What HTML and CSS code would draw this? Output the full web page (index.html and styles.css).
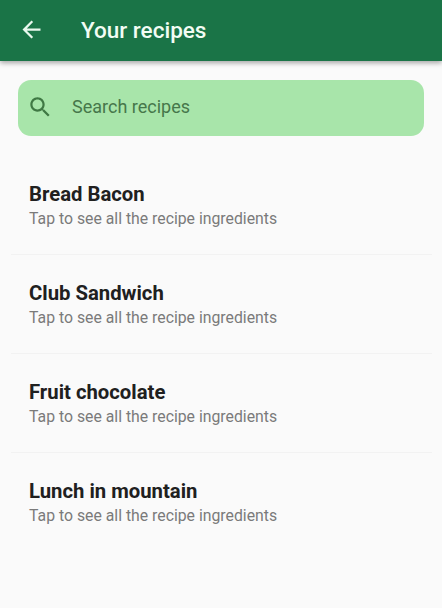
FILE: index.html
```html
<!DOCTYPE html>
<html lang="en">
<head>
<meta charset="utf-8">
<title>Your recipes</title>
<link rel="stylesheet" href="styles.css">
</head>
<body>
<header class="app-bar">
  <svg class="back" viewBox="0 0 24 24"><path d="M20 11H7.83l5.59-5.59L12 4l-8 8 8 8 1.41-1.41L7.83 13H20v-2z"/></svg>
  <h1 class="title">Your recipes</h1>
</header>
<main>
  <div class="search">
    <svg class="search-icon" viewBox="0 0 24 24"><path d="M15.5 14h-.79l-.28-.27C15.41 12.59 16 11.11 16 9.5 16 5.91 13.09 3 9.5 3S3 5.91 3 9.5 5.91 16 9.5 16c1.61 0 3.09-.59 4.23-1.57l.27.28v.79l5 4.99L20.49 19l-4.99-5zm-6 0C7.01 14 5 11.99 5 9.5S7.01 5 9.5 5 14 7.01 14 9.5 11.99 14 9.5 14z"/></svg>
    <span class="search-label">Search recipes</span>
  </div>
  <ul class="list">
    <li class="item"><h2 class="name">Bread Bacon</h2><p class="hint">Tap to see all the recipe ingredients</p></li>
    <li class="item"><h2 class="name">Club Sandwich</h2><p class="hint">Tap to see all the recipe ingredients</p></li>
    <li class="item"><h2 class="name">Fruit chocolate</h2><p class="hint">Tap to see all the recipe ingredients</p></li>
    <li class="item"><h2 class="name">Lunch in mountain</h2><p class="hint">Tap to see all the recipe ingredients</p></li>
  </ul>
</main>
</body>
</html>
```
FILE: styles.css
```css
* { box-sizing: border-box; margin: 0; padding: 0; }
body { background: #fafafa; font-family: Roboto, sans-serif; height: 608px; overflow: hidden; }
.app-bar { height: 61px; background: #1a7447; display: flex; align-items: center; padding: 0 0 2px 18px; box-shadow: 0 2px 5px rgba(0,0,0,.35); }
.back { width: 27px; height: 27px; fill: #e9f8ee; }
.title { margin-left: 36px; font-size: 22.5px; font-weight: 500; line-height: 28px; color: #f2fdf4; }
.search { margin: 19px 18px 0; height: 55.5px; border-radius: 13px; background: #a8e5aa; display: flex; align-items: center; padding: 0 0 1px 9px; }
.search-icon { width: 26.5px; height: 26.5px; fill: #3f7844; }
.search-label { margin: 0 0 1.5px 18.5px; font-size: 18px; line-height: 22px; color: #46774a; }
.list { list-style: none; margin: 20.5px 10px 0 11px; }
.item { height: 99px; padding: 25px 18px 0; border-bottom: 1px solid #f2f2f2; }
.item:last-child { border-bottom: 0; }
.name { font-size: 20.3px; font-weight: 700; line-height: 26px; color: #202020; }
.hint { margin-top: 1px; font-size: 15.8px; line-height: 21px; color: #7a7a7a; }
```
